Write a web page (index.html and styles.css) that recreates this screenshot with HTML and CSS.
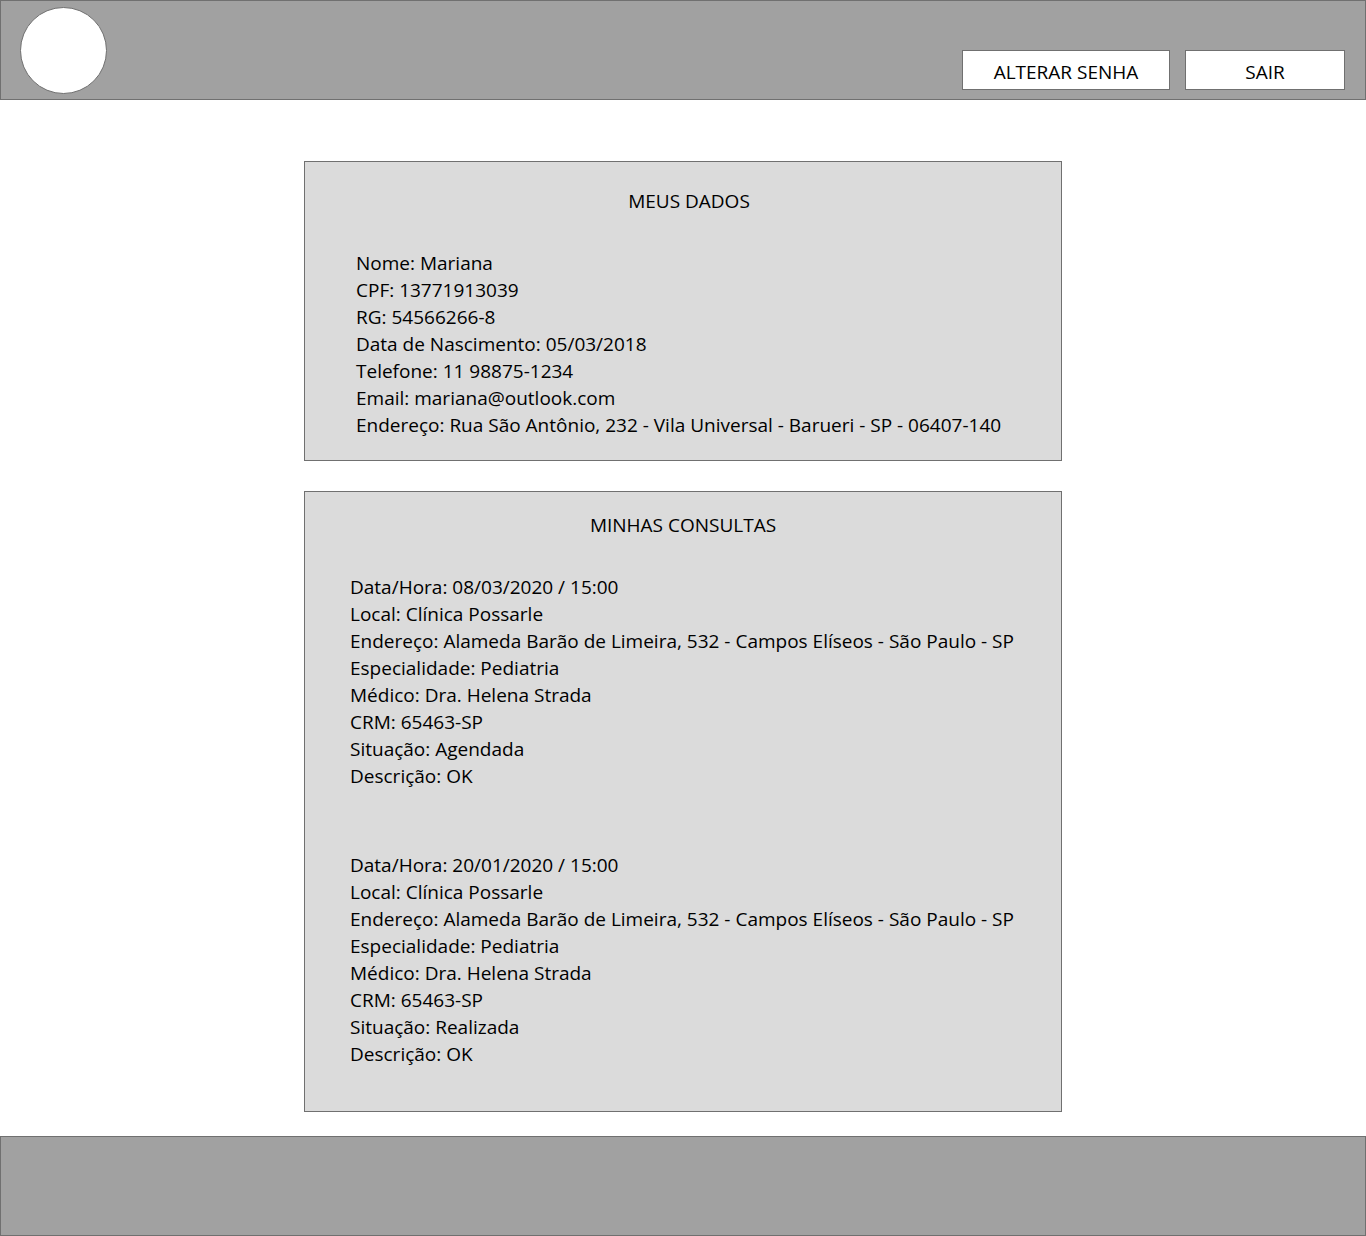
FILE: index.html
```html
<!DOCTYPE html>
<html lang="pt-BR">
<head>
<meta charset="utf-8">
<meta name="viewport" content="width=device-width, initial-scale=1">
<title>Meus dados</title>
<link rel="stylesheet" href="styles.css">
</head>
<body>
<header class="bar header">
  <div class="logo"></div>
  <nav class="actions">
    <button type="button" class="button button-wide">ALTERAR SENHA</button>
    <button type="button" class="button">SAIR</button>
  </nav>
</header>
<main class="content">
  <section class="card profile">
    <h1 class="title">MEUS DADOS</h1>
    <ul class="details">
      <li>Nome: Mariana</li>
      <li>CPF: 13771913039</li>
      <li>RG: 54566266-8</li>
      <li>Data de Nascimento: 05/03/2018</li>
      <li>Telefone: 11 98875-1234</li>
      <li>Email: mariana@outlook.com</li>
      <li>Endereço: Rua São Antônio, 232 - Vila Universal - Barueri - SP - 06407-140</li>
    </ul>
  </section>
  <section class="card appointments">
    <h2 class="title">MINHAS CONSULTAS</h2>
    <ul class="details">
      <li>Data/Hora: 08/03/2020 / 15:00</li>
      <li>Local: Clínica Possarle</li>
      <li>Endereço: Alameda Barão de Limeira, 532 - Campos Elíseos - São Paulo - SP</li>
      <li>Especialidade: Pediatria</li>
      <li>Médico: Dra. Helena Strada</li>
      <li>CRM: 65463-SP</li>
      <li>Situação: Agendada</li>
      <li>Descrição: OK</li>
    </ul>
    <ul class="details">
      <li>Data/Hora: 20/01/2020 / 15:00</li>
      <li>Local: Clínica Possarle</li>
      <li>Endereço: Alameda Barão de Limeira, 532 - Campos Elíseos - São Paulo - SP</li>
      <li>Especialidade: Pediatria</li>
      <li>Médico: Dra. Helena Strada</li>
      <li>CRM: 65463-SP</li>
      <li>Situação: Realizada</li>
      <li>Descrição: OK</li>
    </ul>
  </section>
</main>
<footer class="bar"></footer>
</body>
</html>
```

FILE: styles.css
```css
* {
  box-sizing: border-box;
}

body {
  margin: 0;
  min-height: 100vh;
  display: flex;
  flex-direction: column;
  background: #fff;
  color: #000;
  font-family: "Open Sans", sans-serif;
  font-size: 19px;
  font-weight: 400;
  line-height: 27px;
}

.bar {
  min-height: 100px;
  background: #a1a1a1;
  border: 1px solid #707070;
}

.header {
  display: flex;
  justify-content: space-between;
  padding: 6px 20px 5px 19px;
}

.logo {
  width: 87px;
  height: 87px;
  background: #fff;
  border: 1px solid #707070;
  border-radius: 50%;
}

.actions {
  display: flex;
  align-items: flex-end;
  gap: 15px;
  padding-bottom: 4px;
}

.button {
  width: 160px;
  height: 40px;
  padding: 5px 0 0;
  background: #fff;
  border: 1px solid #707070;
  color: inherit;
  font: inherit;
}

.button-wide {
  width: 208px;
}

.content {
  flex: 1;
  display: flex;
  flex-direction: column;
  gap: 30px;
  width: 100%;
  max-width: 758px;
  margin: 0 auto;
  padding: 61px 0 24px;
}

.card {
  background: #dbdbdb;
  border: 1px solid #707070;
}

.profile {
  padding: 26px 39px 21px 51px;
}

.appointments {
  padding: 20px 45px 43px;
}

.title {
  margin: 0 0 35px;
  font-size: inherit;
  font-weight: inherit;
  text-align: center;
}

.details {
  margin: 0;
  padding: 0;
  list-style: none;
}

.details + .details {
  margin-top: 62px;
}
```
